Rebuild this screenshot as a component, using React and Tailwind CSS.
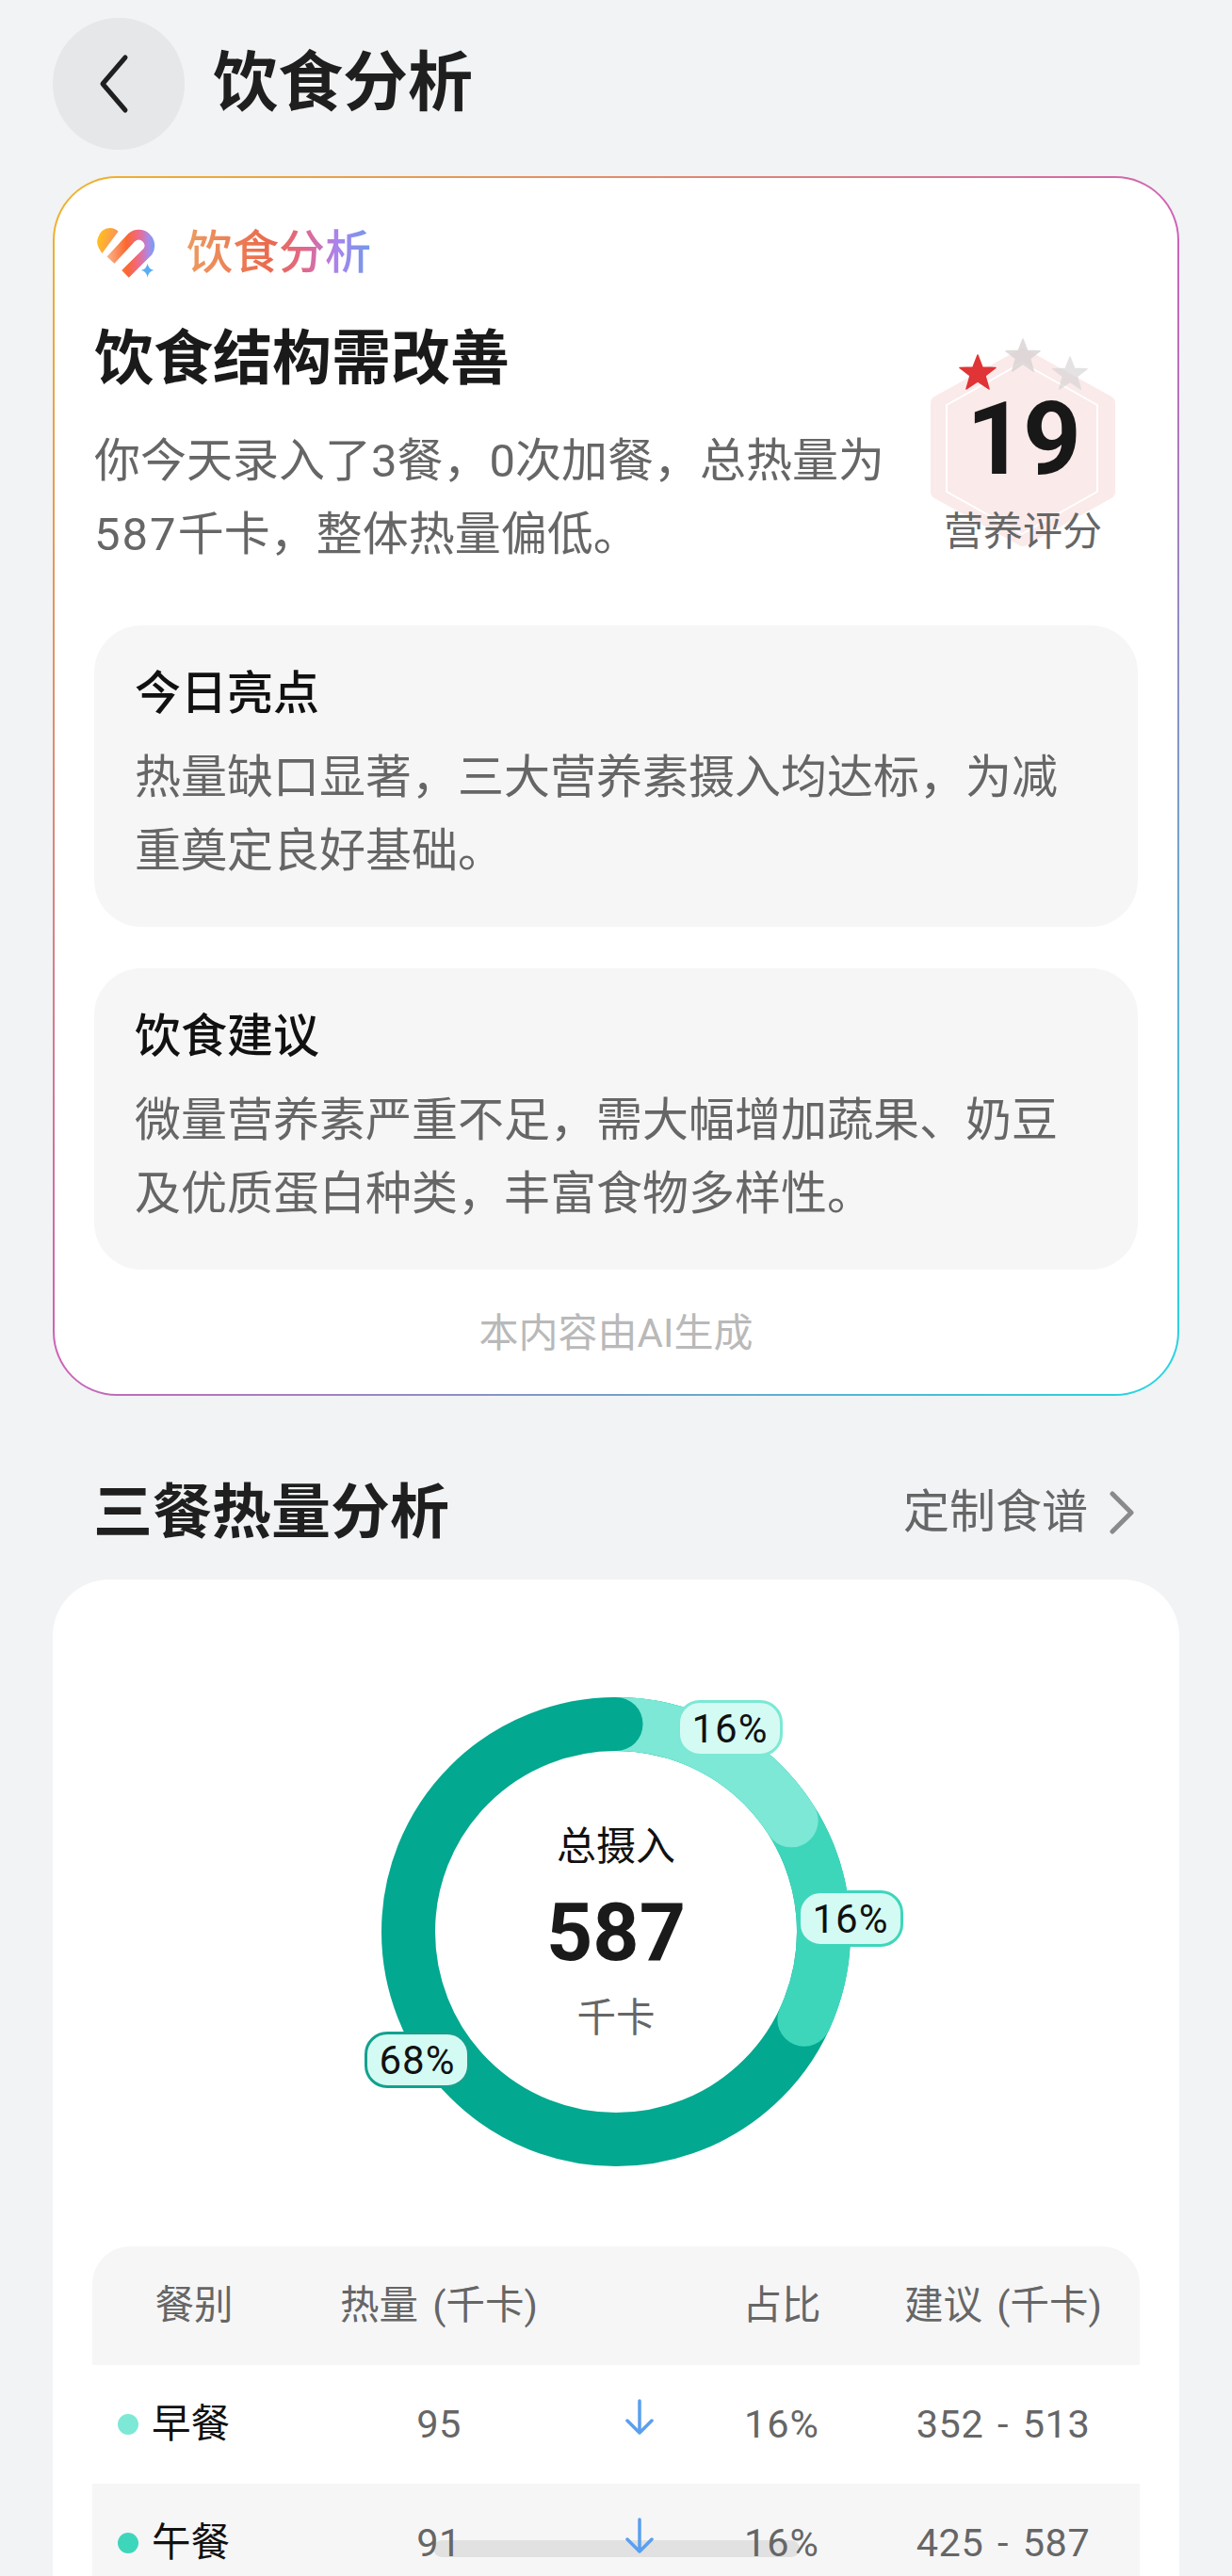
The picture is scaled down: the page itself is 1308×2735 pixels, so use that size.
import React from 'react';

const polar = (deg, r = 220.5) => {
  const a = (deg * Math.PI) / 180;
  return [249 + r * Math.sin(a), 249 - r * Math.cos(a)];
};

const arc = (from, to) => {
  const [x1, y1] = polar(from);
  const [x2, y2] = polar(to);
  return `M${x1} ${y1} A220.5 220.5 0 ${to - from > 180 ? 1 : 0} 1 ${x2} ${y2}`;
};

const rows = [
  { name: '早餐', dot: 'bg-[#7ce8d5]', kcal: '95', pct: '16%', advice: '352 - 513' },
  { name: '午餐', dot: 'bg-[#3ed6bb]', kcal: '91', pct: '16%', advice: '425 - 587', shaded: true, bar: true },
];

const Star = ({ className, fill }) => (
  <svg viewBox="0 0 40 40" className={className}>
    <path
      d="M20 2 L25 15 L39 15.500 L28 24 L32 38 L20 30 L8 38 L12 24 L1 15.500 L15 15 Z"
      fill={fill}
      stroke={fill}
      strokeWidth="1.500"
      strokeLinejoin="round"
    />
  </svg>
);

const Logo = () => (
  <svg viewBox="70 72 185 160" className="w-[63px] h-[54px] shrink-0">
    <defs>
      <linearGradient id="lobe" x1="0" y1="0" x2="1" y2="0.300">
        <stop offset="0" stopColor="#ffc815" />
        <stop offset="1" stopColor="#fb8f5b" />
      </linearGradient>
      <linearGradient id="pin" gradientUnits="userSpaceOnUse" x1="100" y1="150" x2="255" y2="150">
        <stop offset="0" stopColor="#fdb48a" />
        <stop offset="0.400" stopColor="#f9682f" />
        <stop offset="0.650" stopColor="#ee6a8c" />
        <stop offset="0.850" stopColor="#a98ae8" />
        <stop offset="1" stopColor="#62a8f6" />
      </linearGradient>
    </defs>
    <path d="M85 152 L75 136 Q66 120 72 103 Q82 73 110 72 Q125 72 136 83 Z" fill="url(#lobe)" />
    <path d="M112 173 L178 102 A34 34 0 0 1 229 146 L158 217" fill="none" stroke="url(#pin)" strokeWidth="32" />
    <path d="M228 184 Q231 202 248 205 Q231 208 228 228 Q225 208 208 205 Q225 202 228 184 Z" fill="#58aef5" />
  </svg>
);

const ScoreBadge = () => (
  <div className="relative w-[196px] h-[232px] mt-[17px] shrink-0 flex flex-col items-center">
    <svg viewBox="0 0 196 210" className="absolute left-0 top-[12px] w-[196px] h-[210px]">
      <path d="M98 8 L188 58 L188 152 L98 202 L8 152 L8 58 Z" fill="#fbeaea" stroke="#fbeaea" strokeWidth="16" strokeLinejoin="round" />
      <path d="M97 15 L177 60 L177 152 L97 197 L17 152 L17 60 Z" fill="none" stroke="#ffffff" strokeWidth="2" strokeLinejoin="round" />
    </svg>
    <Star className="absolute left-[30px] top-[17px] w-[40px] h-[40px]" fill="#e03436" />
    <Star className="absolute left-[79px] top-0 w-[38px] h-[38px] opacity-80" fill="#d9d3d3" />
    <Star className="absolute left-[128px] top-[19px] w-[40px] h-[38px] opacity-70" fill="#d9d6d6" />
    <div className="relative mt-[48px] h-[120px] leading-[120px] text-[108px] font-bold text-[#181818] tracking-[-2px]">19</div>
    <div className="relative mt-[14px] h-[50px] leading-[50px] text-[42px] text-[#666666] whitespace-nowrap">营养评分</div>
  </div>
);

const TipCard = ({ title, lines, className }) => (
  <div className={`rounded-[50px] bg-[#f6f6f7] pt-[43px] pb-[41px] pl-[43px] ${className}`}>
    <div className="h-[60px] leading-[60px] text-[49px] font-medium text-[#111111]">{title}</div>
    <div className="mt-[20px] text-[49px] leading-[78px] text-[#666666]">
      {lines.map((l) => (
        <div key={l} className="whitespace-nowrap">{l}</div>
      ))}
    </div>
  </div>
);

const Pill = ({ className, children }) => (
  <div className={`absolute w-[112px] h-[60px] rounded-[24px] border-[3px] bg-[#d4fbf3] flex items-center justify-center text-[42px] tracking-[1px] text-[#111111] ${className}`}>
    {children}
  </div>
);

const Donut = () => (
  <div className="relative w-[498px] h-[498px] mx-auto mt-[124px]">
    <svg viewBox="0 0 498 498" className="w-full h-full">
      <circle cx="249" cy="249" r="220.500" fill="none" stroke="#02a88f" strokeWidth="57" />
      <path d={arc(0, 115)} fill="none" stroke="#3ed6bb" strokeWidth="57" />
      <circle cx={polar(115)[0]} cy={polar(115)[1]} r="28.500" fill="#3ed6bb" />
      <path d={arc(0, 57.6)} fill="none" stroke="#7ce8d5" strokeWidth="57" />
      <circle cx={polar(57.6)[0]} cy={polar(57.6)[1]} r="28.500" fill="#7ce8d5" />
      <circle cx="249" cy="28.500" r="28.500" fill="#02a88f" />
    </svg>
    <div className="absolute inset-0 flex flex-col items-center pt-[129px]">
      <div className="h-[60px] leading-[60px] text-[42px] text-[#111111]">总摄入</div>
      <div className="mt-[11px] h-[100px] leading-[100px] text-[86px] font-bold text-[#1a1a1a]">587</div>
      <div className="mt-[11px] h-[60px] leading-[60px] text-[41.500px] text-[#666666]">千卡</div>
    </div>
    <Pill className="left-[314px] top-[3px] border-[#7ce8d5]">16%</Pill>
    <Pill className="left-[442px] top-[205px] border-[#3ed6bb]">16%</Pill>
    <Pill className="left-[-18px] top-[355px] border-[#12a28e]">68%</Pill>
  </div>
);

const gridCols = 'grid grid-cols-[216px_304px_122px_180px_1fr] items-center h-[126px] text-center';

const MealTable = () => (
  <div className="mx-[42px] mt-[85px] rounded-t-[40px] overflow-hidden text-[41.500px] text-[#666666]">
    <div className={`${gridCols} bg-[#f6f6f7] [word-spacing:5px]`}>
      <div>餐别</div>
      <div>热量 (千卡)</div>
      <div />
      <div>占比</div>
      <div>建议 (千卡)</div>
    </div>
    {rows.map((r) => (
      <div key={r.name} className={`${gridCols} relative ${r.shaded ? 'bg-[#f6f6f7]' : 'bg-white'}`}>
        {r.bar && <div className="absolute left-[362px] top-[60px] w-[389px] h-[18px] rounded-full bg-[#e1e1e1]" />}
        <div className="relative flex items-center pl-[27px] gap-[14px] text-[#111111]">
          <span className={`w-[22px] h-[22px] rounded-full ${r.dot}`} />
          {r.name}
        </div>
        <div className="relative tracking-[0.500px]">{r.kcal}</div>
        <div className="relative flex justify-center pb-[16px]">
          <svg viewBox="0 0 32 38" className="w-[32px] h-[38px]" fill="none" stroke="#5a9ff0" strokeWidth="3.500" strokeLinecap="round" strokeLinejoin="round">
            <path d="M16 2 V36 M3 23 L16 36 L29 23" />
          </svg>
        </div>
        <div className="relative tracking-[1px]">{r.pct}</div>
        <div className="relative tracking-[0.500px] [word-spacing:4px]">{r.advice}</div>
      </div>
    ))}
  </div>
);

export default function App() {
  return (
    <div className="h-[2735px] overflow-hidden bg-[#f1f3f5] [font-family:Roboto,'Noto_Sans_CJK_SC',sans-serif]">
      <header className="flex items-center pl-[56px] pt-[19px] gap-[30px]">
        <button className="w-[140px] h-[140px] rounded-full bg-[#e6e7e9] flex items-center justify-center pr-[10px]">
          <svg viewBox="0 0 40 64" className="w-[40px] h-[64px]" fill="none" stroke="#1f1f1f" strokeWidth="5" strokeLinecap="round" strokeLinejoin="round">
            <path d="M32 4 L8 32 L32 60" />
          </svg>
        </button>
        <h1 className="text-[69px] leading-[80px] font-bold text-[#1f1f1f]">饮食分析</h1>
      </header>

      <section className="mx-[56px] mt-[28px] rounded-[68px] p-[2px] bg-[linear-gradient(135deg,#f0b429,#d062b4_50%,#22d8e2)]">
        <div className="rounded-[66px] bg-white px-[42px] pt-[50px] pb-[34px]">
          <div className="flex items-center h-[60px] pl-[3px] gap-[32px]">
            <Logo />
            <span className="text-[49px] leading-[60px] font-medium bg-clip-text text-transparent bg-[linear-gradient(90deg,#ee9b60,#ea6a4e_45%,#e0688f_65%,#a884f0_82%,#6f9ae8)]">饮食分析</span>
          </div>

          <div className="flex justify-between pr-[24px] mt-[42px]">
            <div>
              <h2 className="text-[63px] leading-[80px] font-bold text-[#1a1a1a]">饮食结构需改善</h2>
              <p className="mt-[30px] text-[49px] leading-[78px] text-[#666666] whitespace-nowrap">
                你今天录入了3餐，0次加餐，总热量为
                <br />
                <span className="tracking-[2px]">587</span>千卡，整体热量偏低。
              </p>
            </div>
            <ScoreBadge />
          </div>

          <TipCard
            className="mt-[57px]"
            title="今日亮点"
            lines={['热量缺口显著，三大营养素摄入均达标，为减', '重奠定良好基础。']}
          />
          <TipCard
            className="mt-[44px]"
            title="饮食建议"
            lines={['微量营养素严重不足，需大幅增加蔬果、奶豆', '及优质蛋白种类，丰富食物多样性。']}
          />
          <div className="mt-[38px] h-[60px] leading-[60px] text-center text-[42px] text-[#b9b9b9]">本内容由AI生成</div>
        </div>
      </section>

      <div className="mt-[84px] pl-[99px] pr-[103px] flex items-center justify-between h-[80px]">
        <h2 className="text-[63px] leading-[80px] font-bold text-[#1f1f1f]">三餐热量分析</h2>
        <div className="flex items-center gap-[22px] text-[49px] text-[#666666]">
          定制食谱
          <svg viewBox="0 0 28 46" className="w-[28px] h-[46px]" fill="none" stroke="#8a8a8a" strokeWidth="5" strokeLinecap="round" strokeLinejoin="round">
            <path d="M4 3 L24 23 L4 43" />
          </svg>
        </div>
      </div>

      <section className="mx-[56px] mt-[31px] rounded-t-[60px] bg-white overflow-hidden pb-[40px]">
        <div className="h-px" />
        <Donut />
        <MealTable />
      </section>
    </div>
  );
}
